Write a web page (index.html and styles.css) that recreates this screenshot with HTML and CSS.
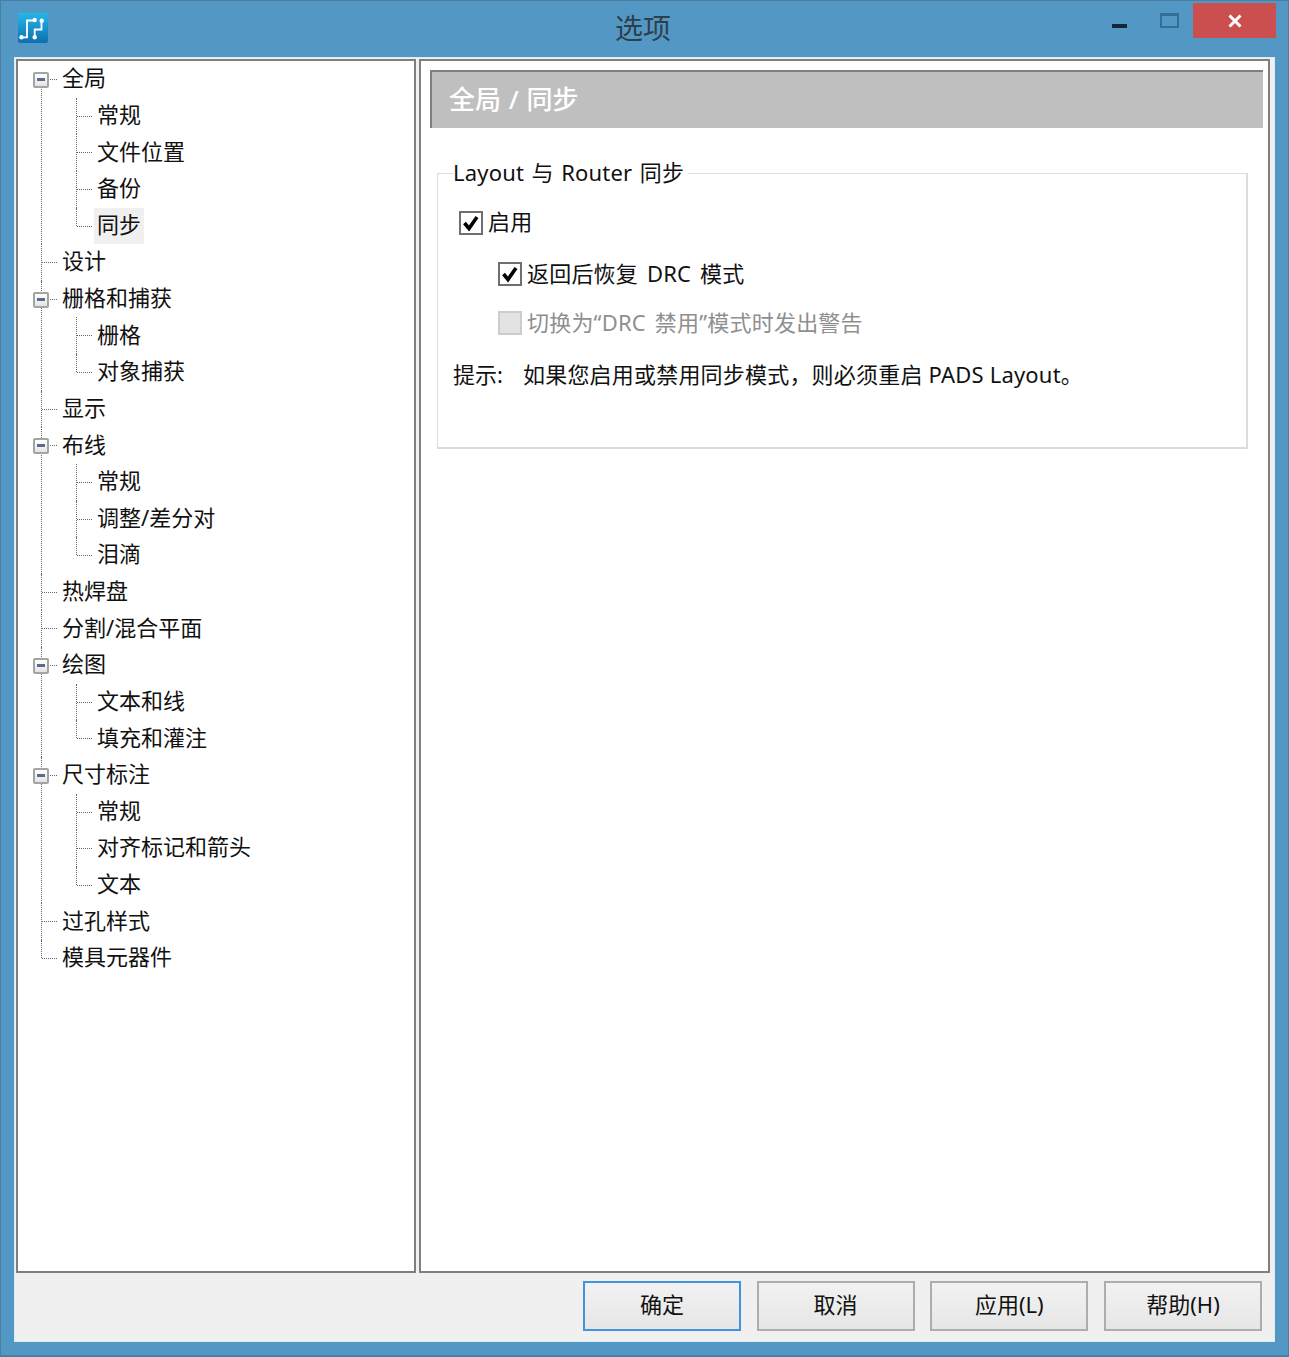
FILE: index.html
```html
<!DOCTYPE html>
<html lang="zh-CN">
<head>
<meta charset="utf-8">
<title>选项</title>
<link rel="stylesheet" href="styles.css">
</head>
<body>
<div class="window">
  <header class="titlebar">
    <svg class="app-icon" width="30" height="30" viewBox="0 0 30 30">
      <defs><linearGradient id="ig" x1="0" y1="0" x2="0" y2="1"><stop offset="0" stop-color="#25b6ea"/><stop offset="1" stop-color="#0f6fb0"/></linearGradient></defs>
      <rect width="30" height="30" rx="2" fill="url(#ig)"/>
      <path d="M3.5 24.3H9V7.5H16.7M16.7 24.3V16.5H23.5V7.7" fill="none" stroke="#fff" stroke-width="1.8"/>
      <circle cx="3.5" cy="24.3" r="2.2" fill="#fff"/><circle cx="16.7" cy="7" r="2.2" fill="#fff"/>
      <circle cx="16.7" cy="24.3" r="2.2" fill="#fff"/><circle cx="23.7" cy="7.7" r="2.2" fill="#fff"/>
    </svg>
    <div class="title">选项</div>
    <div class="controls">
      <span class="ctl ctl-min"></span>
      <span class="ctl ctl-max"></span>
      <span class="ctl ctl-close">
        <svg width="16" height="16" viewBox="0 0 16 16"><path d="M2.5 2.5L13.5 13.5M13.5 2.5L2.5 13.5" stroke="#fff" stroke-width="3"/></svg>
      </span>
    </div>
  </header>
  <main class="client">
    <div class="panes">
      <nav class="pane tree-pane">
        <ul class="tree root">
          <li class="node"><div class="row"><span class="exp"></span><span class="label">全局</span></div>
            <ul class="tree">
              <li class="node"><div class="row"><span class="label">常规</span></div></li>
              <li class="node"><div class="row"><span class="label">文件位置</span></div></li>
              <li class="node"><div class="row"><span class="label">备份</span></div></li>
              <li class="node"><div class="row"><span class="label selected">同步</span></div></li>
            </ul>
          </li>
          <li class="node"><div class="row"><span class="label">设计</span></div></li>
          <li class="node"><div class="row"><span class="exp"></span><span class="label">栅格和捕获</span></div>
            <ul class="tree">
              <li class="node"><div class="row"><span class="label">栅格</span></div></li>
              <li class="node"><div class="row"><span class="label">对象捕获</span></div></li>
            </ul>
          </li>
          <li class="node"><div class="row"><span class="label">显示</span></div></li>
          <li class="node"><div class="row"><span class="exp"></span><span class="label">布线</span></div>
            <ul class="tree">
              <li class="node"><div class="row"><span class="label">常规</span></div></li>
              <li class="node"><div class="row"><span class="label">调整/差分对</span></div></li>
              <li class="node"><div class="row"><span class="label">泪滴</span></div></li>
            </ul>
          </li>
          <li class="node"><div class="row"><span class="label">热焊盘</span></div></li>
          <li class="node"><div class="row"><span class="label">分割/混合平面</span></div></li>
          <li class="node"><div class="row"><span class="exp"></span><span class="label">绘图</span></div>
            <ul class="tree">
              <li class="node"><div class="row"><span class="label">文本和线</span></div></li>
              <li class="node"><div class="row"><span class="label">填充和灌注</span></div></li>
            </ul>
          </li>
          <li class="node"><div class="row"><span class="exp"></span><span class="label">尺寸标注</span></div>
            <ul class="tree">
              <li class="node"><div class="row"><span class="label">常规</span></div></li>
              <li class="node"><div class="row"><span class="label">对齐标记和箭头</span></div></li>
              <li class="node"><div class="row"><span class="label">文本</span></div></li>
            </ul>
          </li>
          <li class="node"><div class="row"><span class="label">过孔样式</span></div></li>
          <li class="node"><div class="row"><span class="label">模具元器件</span></div></li>
        </ul>
      </nav>
      <section class="pane content-pane">
        <h1 class="heading">全局 / 同步</h1>
        <fieldset class="group">
          <legend class="legend">Layout 与 Router 同步</legend>
          <div class="check check-top"><span class="box on"><svg width="20" height="20" viewBox="0 0 20 20"><path d="M3.5 10L8 15.5L16 4" fill="none" stroke="#000" stroke-width="3.6"/></svg></span><span class="check-text">启用</span></div>
          <div class="check check-sub"><span class="box on"><svg width="20" height="20" viewBox="0 0 20 20"><path d="M3.5 10L8 15.5L16 4" fill="none" stroke="#000" stroke-width="3.6"/></svg></span><span class="check-text">返回后恢复 DRC 模式</span></div>
          <div class="check check-sub check-off"><span class="box off"></span><span class="check-text">切换为“DRC 禁用”模式时发出警告</span></div>
          <p class="hint"><span class="hint-key">提示:</span><span>如果您启用或禁用同步模式，则必须重启 PADS Layout。</span></p>
        </fieldset>
      </section>
    </div>
    <footer class="buttons">
      <button class="btn btn-default">确定</button>
      <button class="btn">取消</button>
      <button class="btn">应用(L)</button>
      <button class="btn">帮助(H)</button>
    </footer>
  </main>
</div>
</body>
</html>
```
FILE: styles.css
```css
* { box-sizing: border-box; }
html, body { margin: 0; padding: 0; }
body {
  width: 1289px;
  height: 1357px;
  overflow: hidden;
  background: #5398c5;
  font-family: "Noto Sans", "Noto Sans CJK SC", sans-serif;
  font-size: 22px;
  color: #111;
}
.window {
  height: 1357px;
  display: flex;
  flex-direction: column;
  padding: 0 13px 13px 13px;
  border: 1px solid #4b7f9f;
  border-width: 1px 1px 2px 1px;
}
.titlebar {
  height: 56px;
  flex: none;
  position: relative;
  display: flex;
  align-items: center;
  justify-content: center;
}
.app-icon { position: absolute; left: 4px; top: 12px; }
.title { font-size: 28px; color: #2f3f4a; line-height: 54px; padding: 0 3px 2px 0; }
.controls {
  position: absolute;
  right: -1px;
  top: 2px;
  display: flex;
  align-items: flex-start;
}
.ctl { display: block; }
.ctl-min { width: 15px; height: 4px; background: #12283a; margin: 21px 33px 0 0; }
.ctl-max { width: 19px; height: 15px; border: 2px solid #2f6f99; border-top-width: 3px; margin: 10px 14px 0 0; }
.ctl-close {
  width: 83px;
  height: 35px;
  background: #cb4f4f;
  display: flex;
  align-items: center;
  justify-content: center;
}
.client {
  flex: 1;
  display: flex;
  flex-direction: column;
  background: #f0f0f0;
  border: 1px solid #dcebf4;
  padding: 1px 4px 0 1px;
  min-height: 0;
}
.panes { height: 1214px; flex: none; display: flex; gap: 3px; }
.pane { background: #fff; border: 2px solid #7f7f7f; }
.tree-pane { width: 400px; }
.content-pane { flex: 1; padding: 9px 5px 0 9px; }
.tree { list-style: none; margin: 0; padding: 0; }
.root { padding: 0 0 0 23px; }
.tree .tree { padding-left: 35px; }
.row {
  height: 36.625px;
  display: flex;
  align-items: center;
  padding-left: 20px;
}
.node { position: relative; }
.node::before {
  content: "";
  position: absolute;
  left: 0;
  top: 0;
  bottom: 0;
  border-left: 1px dotted #666;
}
.node:last-child::before { bottom: auto; height: 18px; }
.node::after {
  content: "";
  position: absolute;
  left: 1px;
  top: 18px;
  width: 15px;
  border-top: 1px dotted #666;
}
.root > .node:first-child::before { top: 18px; }
.exp {
  position: absolute;
  left: -8px;
  top: 11px;
  width: 16px;
  height: 16px;
  z-index: 1;
  background: linear-gradient(#fff, #e4e4e4);
  border: 2px solid #a4a4a4;
  border-radius: 2px;
}
.exp::after {
  content: "";
  position: absolute;
  left: 2px;
  top: 4px;
  width: 8px;
  height: 3px;
  background: #5a6a90;
}
.label {
  display: block;
  height: 36px;
  line-height: 32px;
  padding: 0 3px 4px;
  margin-left: -2px;
  white-space: nowrap;
}
.selected { background: #f0f0f0; }
.heading {
  margin: 0;
  height: 58px;
  background: #bfbfbf;
  color: #fff;
  font-size: 26px;
  font-weight: 500;
  line-height: 55px;
  padding-left: 17px;
  word-spacing: 1px;
  border-top: 2px solid #7f7f7f;
  border-left: 2px solid #7f7f7f;
}
.group {
  margin: 32px 15px 0 7px;
  min-width: 0;
  height: 289px;
  padding: 0 15px;
  border: 2px solid #dcdcdc;
  border-width: 1px 2px 2px 1px;
}
.legend {
  padding: 0 4px 2px 0;
  line-height: 24px;
  letter-spacing: .2px;
  word-spacing: 1.5px;
}
.check { display: flex; align-items: center; gap: 5px; height: 26px; }
.check-text { padding-bottom: 4px; letter-spacing: .2px; word-spacing: 3px; }
.box {
  width: 24px;
  height: 24px;
  flex: none;
  display: flex;
  align-items: center;
  justify-content: center;
}
.on { background: #fff; border: 2px solid #6f6f6f; }
.off { background: #e3e3e3; border: 2px solid #cdcdcd; }
.check-top { margin: 24px 0 0 6px; }
.check-top .check-text { padding-bottom: 6px; }
.check-sub { margin: 25px 0 0 45px; }
.check-off { margin-top: 23px; color: #8f8f8f; }
.hint {
  margin: 25px 0 0;
  display: flex;
  line-height: 26px;
  white-space: nowrap;
  letter-spacing: .2px;
}
.hint-key { width: 70px; letter-spacing: 0; }
.buttons {
  flex: 1;
  display: flex;
  justify-content: flex-end;
  align-items: flex-start;
  gap: 15.7px;
  padding: 8px 8px 0 0;
}
.btn {
  width: 158px;
  height: 50px;
  background: linear-gradient(#f2f2f2, #e6e6e6);
  border: 2px solid #adadad;
  font: inherit;
  color: #111;
  padding: 0 0 7px;
}
.btn-default { border-color: #3f94dc; }
```
